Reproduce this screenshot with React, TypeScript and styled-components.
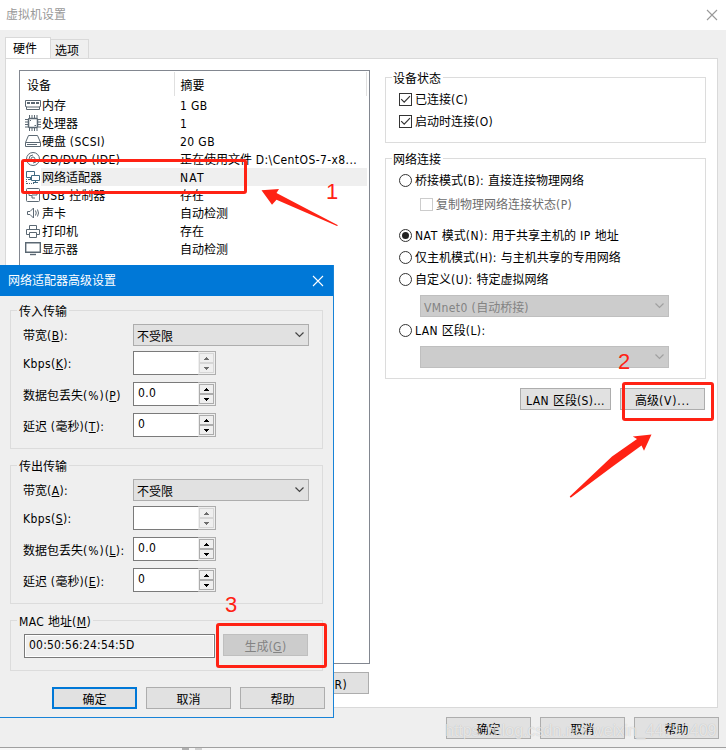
import React from "react";
import styled, { createGlobalStyle } from "styled-components";

const Global = createGlobalStyle`
  * { box-sizing: border-box; }
  body { margin: 0; overflow: hidden; }
`;

const Screen = styled.div`
  position: relative;
  width: 726px;
  height: 750px;
  overflow: hidden;
  background: #f7f7f7;
  color: #000;
  font: 12px/16px "DejaVu Sans Condensed", "Noto Sans CJK SC", sans-serif;
  white-space: pre;
`;

const SettingsWindow = styled.div`
  height: 748px;
  display: flex;
  flex-direction: column;
  background: #efefef;
  border-bottom: 1px solid #a0a0a0;
`;

const TitleBar = styled.div`
  height: 30px;
  flex: none;
  display: flex;
  align-items: center;
  justify-content: space-between;
  padding: 0 8px 0 6px;
  background: #fff;
  color: #999;
`;

const Tabs = styled.div`
  display: flex;
  align-items: flex-end;
  height: 28px;
  flex: none;
  padding-left: 5px;
`;

const Tab = styled.div<{ $active?: boolean }>`
  width: ${(p) => (p.$active ? 46 : 38)}px;
  height: ${(p) => (p.$active ? 22 : 19)}px;
  padding: ${(p) => (p.$active ? "3px 0 0 7px" : "3px 0 0 4px")};
  background: ${(p) => (p.$active ? "#fff" : "#efefef")};
  border: 1px solid #d9d9d9;
  border-bottom: 0;
  border-left-width: ${(p) => (p.$active ? 1 : 0)}px;
  margin-bottom: ${(p) => (p.$active ? -1 : 0)}px;
`;

const Panel = styled.div`
  display: flex;
  width: 713px;
  height: 650px;
  flex: none;
  margin-left: 5px;
  padding: 12px 0 0 13px;
  background: #fff;
  border: 1px solid #d9d9d9;
`;

const LeftColumn = styled.div`
  width: 351px;
  display: flex;
  flex-direction: column;
  align-items: flex-end;
  margin-top: -1px;
`;

const DeviceList = styled.div`
  width: 351px;
  height: 594px;
  margin-bottom: 8px;
  border: 1px solid #828790;
`;

const HeaderRow = styled.div`
  display: flex;
  height: 25px;
  padding: 1px 2px 0 0;
`;

const HeaderCell = styled.div<{ $w: number }>`
  width: ${(p) => p.$w}px;
  padding: 6px 0 0 ${(p) => (p.$w > 160 ? 6 : 7)}px;
  border-right: 1px solid #e0e0e0;
`;

const DeviceRow = styled.div`
  display: flex;
  height: 18px;
  padding-left: 5px;
`;

const IconCell = styled.div`
  width: 16px;
  display: flex;
  align-items: center;
`;

const DeviceCells = styled.div<{ $selected?: boolean }>`
  display: flex;
  width: 326px;
  height: 18px;
  line-height: 21px;
  padding-left: 1px;
  background: ${(p) => (p.$selected ? "#efefef" : "transparent")};
`;

const DeviceName = styled.div`
  width: 138px;
`;

const Latin = styled.span<{ $ls?: number }>`
  letter-spacing: ${(p) => p.$ls ?? 0.4}px;
`;

const RightColumn = styled.div`
  width: 321px;
  margin-left: 15px;
  padding-top: 6px;
`;

const Group = styled.div<{ $h: number; $gap?: number; $dialog?: boolean }>`
  height: ${(p) => p.$h}px;
  margin-bottom: ${(p) => p.$gap ?? 0}px;
  border: 1px solid #dcdcdc;
  background: ${(p) => (p.$dialog ? "#efefef" : "#fff")};
`;

const Legend = styled.div<{ $dialog?: boolean }>`
  width: fit-content;
  height: 16px;
  margin: -8px 0 0 6px;
  padding: 0 2px 0 ${(p) => (p.$dialog ? 2 : 1)}px;
  line-height: 18px;
  background: ${(p) => (p.$dialog ? "#efefef" : "#fff")};
`;

const OptionRow = styled.label<{ $top?: number; $indent?: boolean; $disabled?: boolean }>`
  display: flex;
  align-items: flex-start;
  gap: 3px;
  height: 22px;
  margin-top: ${(p) => p.$top ?? 0}px;
  padding: 4px 0 0 ${(p) => (p.$indent ? 34 : 13)}px;
  line-height: 15px;
  color: ${(p) => (p.$disabled ? "#6d6d6d" : "#000")};
`;

const Box = styled.span<{ $disabled?: boolean }>`
  width: 13px;
  height: 13px;
  flex: none;
  display: flex;
  background: #fff;
  border: 1px solid ${(p) => (p.$disabled ? "#ccc" : "#333")};
`;

const Radio = styled.span`
  width: 13px;
  height: 13px;
  flex: none;
  display: flex;
  align-items: center;
  justify-content: center;
  border: 1px solid #333;
  border-radius: 50%;
`;

const Dot = styled.span`
  width: 7px;
  height: 7px;
  border-radius: 50%;
  background: #222;
`;

const Select = styled.div<{ $disabled?: boolean; $top?: number }>`
  display: flex;
  align-items: center;
  justify-content: space-between;
  width: ${(p) => (p.$disabled ? 249 : 176)}px;
  height: 22px;
  flex: none;
  margin-left: ${(p) => (p.$disabled ? 34 : 0)}px;
  margin-top: ${(p) => p.$top ?? 0}px;
  padding: 0 4px 0 3px;
  line-height: 20px;
  color: ${(p) => (p.$disabled ? "#838383" : "#000")};
  background: ${(p) => (p.$disabled ? "#ccc" : "#e1e1e1")};
  border: 1px solid ${(p) => (p.$disabled ? "#bfbfbf" : "#adadad")};
`;

const SelectValue = styled.span`
  padding-top: 3px;
`;

const ButtonRow = styled.div<{ $top: number; $right: number }>`
  display: flex;
  justify-content: flex-end;
  gap: 9px;
  margin-top: ${(p) => p.$top}px;
  padding-right: ${(p) => p.$right}px;
`;

const PushButton = styled.div<{ $w?: number; $disabled?: boolean; $primary?: boolean; $inset?: boolean }>`
  display: flex;
  align-items: center;
  justify-content: center;
  width: ${(p) => p.$w ?? 85}px;
  height: 22px;
  flex: none;
  margin-right: ${(p) => (p.$inset ? 1 : 0)}px;
  padding-top: 3px;
  color: ${(p) => (p.$disabled ? "#838383" : "#000")};
  background: ${(p) => (p.$disabled ? "#ccc" : "#e1e1e1")};
  border: ${(p) => (p.$primary ? "2px solid #0078d7" : `1px solid ${p.$disabled ? "#bfbfbf" : "#adadad"}`)};
`;

const Dialog = styled.div`
  position: absolute;
  left: 0;
  top: 265px;
  width: 334px;
  height: 453px;
  background: #efefef;
  border: solid #1883d7;
  border-width: 0 1px 1px 0;
`;

const DialogTitle = styled.div`
  display: flex;
  align-items: center;
  justify-content: space-between;
  height: 31px;
  padding: 0 9px 0 8px;
  color: #fff;
  background: #0078d7;
`;

const DialogBody = styled.div`
  width: 323px;
  padding: 14px 0 0 10px;
`;

const Field = styled.div<{ $h: number; $top?: number; $indent?: number }>`
  display: flex;
  align-items: flex-start;
  height: ${(p) => p.$h}px;
  margin-top: ${(p) => p.$top ?? 0}px;
  padding-left: ${(p) => p.$indent ?? 12}px;
`;

const FieldLabel = styled.div<{ $top?: number }>`
  width: 110px;
  flex: none;
  padding-top: ${(p) => p.$top ?? 0}px;
`;

const Spinner = styled.div`
  display: flex;
  width: 83px;
  height: 24px;
  border: 1px solid #adadad;
  background: #efefef;
`;

const SpinValue = styled.div`
  width: 65px;
  height: 24px;
  flex: none;
  margin: -1px 0 0 -1px;
  padding: 2px 0 0 4px;
  background: #fff;
  border: 1px solid #7a7a7a;
  border-right: 0;
`;

const SpinButtons = styled.div`
  display: flex;
  flex-direction: column;
  width: 16px;
  margin: 1px 0 0 1px;
`;

const SpinButton = styled.div<{ $disabled?: boolean }>`
  display: flex;
  align-items: center;
  justify-content: center;
  width: 15px;
  height: 10px;
  color: ${(p) => (p.$disabled ? "#6d6d6d" : "#000")};
  border: 1px solid ${(p) => (p.$disabled ? "#d6d6d6" : "#acacac")};
`;

const MacInput = styled.div`
  width: 191px;
  height: 24px;
  margin-right: 8px;
  padding: 2px 0 0 4px;
  border: 1px solid #7a7a7a;
  box-shadow: inset 0 0 0 1px #fff;
`;

const BottomEdge = styled.div`
  display: flex;
  height: 2px;
  padding-left: 182px;
  gap: 6px;
`;

const EdgeMark = styled.div<{ $light?: boolean }>`
  width: 7px;
  background: ${(p) => (p.$light ? "#d0d0d0" : "#b0b0b0")};
`;

const Annotation = styled.svg`
  position: absolute;
  left: 0;
  top: 0;
`;

const Callout = styled.div<{ $x: number; $y: number; $w: number; $h: number }>`
  position: absolute;
  left: ${(p) => p.$x}px;
  top: ${(p) => p.$y}px;
  width: ${(p) => p.$w}px;
  height: ${(p) => p.$h}px;
  border: 3px solid #ff2214;
  border-radius: 3px;
`;

const StepNumber = styled.div<{ $x: number; $y: number }>`
  position: absolute;
  left: ${(p) => p.$x}px;
  top: ${(p) => p.$y}px;
  color: #ff2214;
  font: 22px/24px "Liberation Sans", sans-serif;
`;

const Watermark = styled.div`
  position: absolute;
  left: 445px;
  top: 721px;
  color: rgba(255, 255, 255, 0.65);
  font: 16px/20px "Liberation Sans", sans-serif;
  letter-spacing: -0.02px;
  text-shadow: 0 0 1px rgba(0, 0, 0, 0.22);
`;

/* Interface text: CJK runs keep their 12px cells, Latin runs are tracked slightly wider. */
const Mixed = ({ text, mnemonic, tail, ls }: { text: string; mnemonic?: string; tail?: string; ls?: number }) => (
  <span>
    {text
      .split(/([\x20-\x7e]+)/)
      .filter(Boolean)
      .map((run, i) =>
        /[\x20-\x7e]/.test(run) ? <Latin key={i} $ls={ls}>{run}</Latin> : <React.Fragment key={i}>{run}</React.Fragment>
      )}
    {mnemonic && (
      <Latin>
        (<u>{mnemonic}</u>){tail}
      </Latin>
    )}
  </span>
);

const Close = ({ color }: { color: string }) => (
  <svg width="12" height="12" viewBox="0 0 12 12" stroke={color} strokeWidth="1.1">
    <path d="M1 1L11 11M11 1L1 11" />
  </svg>
);

const Chevron = ({ color }: { color: string }) => (
  <svg width="9" height="6" viewBox="0 0 9 6" fill="none" stroke={color} strokeWidth="1.2">
    <path d="M.5 .5L4.5 4.5L8.5 .5" />
  </svg>
);

const Check = () => (
  <svg width="11" height="11" viewBox="0 0 11 11" fill="none" stroke="#333" strokeWidth="1.2">
    <path d="M1.2 5.2L4.2 8.2L10 2.2" />
  </svg>
);

const iconShapes: Record<string, React.ReactNode> = {
  memory: (
    <>
      <path d="M.5 3.5H15.5V9.5H14.5V12.5H1.5V9.5H.5Z" />
      <path d="M2 6H5M6 6H10M11 6H14" strokeWidth="2" />
      <path d="M2 10H14" />
    </>
  ),
  cpu: (
    <>
      <rect x="3.5" y="3.5" width="9" height="9" rx="1" strokeWidth="1.5" />
      <path d="M4.5 0V3M7 0V3M9.5 0V3M12 0V3M4.5 13V16M7 13V16M9.5 13V16M12 13V16M0 4.5H3M0 7H3M0 9.5H3M0 12H3M13 4.5H16M13 7H16M13 9.5H16M13 12H16" />
      <path d="M5 5.5H6M9.5 10.5H11" />
    </>
  ),
  disk: (
    <>
      <path d="M3.5 2.5H12.5L15.5 9.5V13.5H.5V9.5Z" />
      <path d="M.5 9.5H15.5M2 11.5H12" />
    </>
  ),
  cd: (
    <>
      <circle cx="8" cy="8" r="6.5" />
      <circle cx="8" cy="8" r="2" />
      <path d="M4 8A4 4 0 0 1 8 4M12 8A4 4 0 0 1 8 12" />
    </>
  ),
  network: (
    <>
      <path d="M1.5 2.5H9.5V8.5H1.5ZM5.5 9V10M3 10.5H7" stroke="#426b82" />
      <path d="M6.5 6.5H14.5V11.5H6.5Z" fill="#fff" stroke="#426b82" />
      <path d="M10.5 12V13M8 13.5H13" stroke="#426b82" />
      <path d="M1.5 10V15M2 14.5H9" strokeDasharray="1 1" />
    </>
  ),
  usb: (
    <>
      <rect x="1.5" y="1.5" width="13" height="13" rx="1" />
      <path d="M4 5V8.5H7V11H10M7 8H12V5M10 4.5H13" />
    </>
  ),
  sound: (
    <>
      <path d="M2.5 6.5H5L8.5 3V13L5 9.5H2.5Z" />
      <path d="M10.5 5.5Q12 8 10.5 10.5M12.5 4.5Q14.5 8 12.5 11.5" />
    </>
  ),
  printer: (
    <>
      <path d="M4.5 6.5V2.5H11.5V6.5M4.5 11.5H1.5V6.5H14.5V11.5H11.5" />
      <path d="M4.5 9.5H11.5V14.5H4.5Z" />
    </>
  ),
  display: (
    <>
      <path d="M.7 1.7H15.3V11.3H.7Z" strokeWidth="1.4" />
      <path d="M5 13.5H11" strokeWidth="1.4" />
    </>
  ),
};

const DeviceIcon = ({ name }: { name: string }) => (
  <svg width="16" height="16" viewBox="0 0 16 16" fill="none" stroke="#5b6873">
    {iconShapes[name]}
  </svg>
);

const devices: { icon: string; name: string; summary: string; selected?: boolean; ls?: number }[] = [
  { icon: "memory", name: "内存", summary: "1 GB" },
  { icon: "cpu", name: "处理器", summary: "1" },
  { icon: "disk", name: "硬盘 (SCSI)", summary: "20 GB" },
  { icon: "cd", name: "CD/DVD (IDE)", summary: "正在使用文件 D:\\CentOS-7-x8..." },
  { icon: "network", name: "网络适配器", summary: "NAT", selected: true, ls: 1.2 },
  { icon: "usb", name: "USB 控制器", summary: "存在" },
  { icon: "sound", name: "声卡", summary: "自动检测" },
  { icon: "printer", name: "打印机", summary: "存在" },
  { icon: "display", name: "显示器", summary: "自动检测" },
];

const Spin = ({ value, disabled }: { value: string; disabled?: boolean }) => (
  <Spinner>
    <SpinValue>
      <Mixed text={value} />
    </SpinValue>
    <SpinButtons>
      <SpinButton $disabled={disabled}>
        <svg width="5" height="3" fill="currentColor"><path d="M2 0H3V1H4V2H5V3H0V2H1V1H2Z" /></svg>
      </SpinButton>
      <SpinButton $disabled={disabled}>
        <svg width="5" height="3" fill="currentColor"><path d="M0 0H5V1H4V2H3V3H2V2H1V1H0Z" /></svg>
      </SpinButton>
    </SpinButtons>
  </Spinner>
);

const Transfer = ({ title, keys, tail }: { title: string; keys: string[]; tail: string }) => (
  <Group $h={139} $gap={16} $dialog>
    <Legend $dialog>{title}</Legend>
    <Field $h={27} $top={5}>
      <FieldLabel $top={4}><Mixed text="带宽" mnemonic={keys[0]} tail=":" /></FieldLabel>
      <Select>
        <SelectValue>不受限</SelectValue>
        <Chevron color="#444" />
      </Select>
    </Field>
    <Field $h={31}>
      <FieldLabel $top={5}><Mixed text="Kbps" mnemonic={keys[1]} tail=":" /></FieldLabel>
      <Spin value="" disabled />
    </Field>
    <Field $h={31}>
      <FieldLabel $top={6}><Mixed text="数据包丢失(%)" ls={1} mnemonic={keys[2]} tail={tail} /></FieldLabel>
      <Spin value="0.0" />
    </Field>
    <Field $h={31}>
      <FieldLabel $top={6}><Mixed text="延迟 (毫秒)" mnemonic={keys[3]} tail=":" /></FieldLabel>
      <Spin value="0" />
    </Field>
  </Group>
);

export default function App() {
  return (
    <Screen>
      <Global />
      <SettingsWindow>
        <TitleBar>
          虚拟机设置
          <Close color="#999" />
        </TitleBar>
        <Tabs>
          <Tab $active>硬件</Tab>
          <Tab>选项</Tab>
        </Tabs>
        <Panel>
          <LeftColumn>
            <DeviceList>
              <HeaderRow>
                <HeaderCell $w={155}>设备</HeaderCell>
                <HeaderCell $w={193}>摘要</HeaderCell>
              </HeaderRow>
              {devices.map((d) => (
                <DeviceRow key={d.name}>
                  <IconCell>
                    <DeviceIcon name={d.icon} />
                  </IconCell>
                  <DeviceCells $selected={d.selected}>
                    <DeviceName><Mixed text={d.name} /></DeviceName>
                    <Mixed text={d.summary} ls={d.ls} />
                  </DeviceCells>
                </DeviceRow>
              ))}
            </DeviceList>
            <PushButton $inset><Mixed text="移除(R)" /></PushButton>
          </LeftColumn>
          <RightColumn>
            <Group $h={66} $gap={15}>
              <Legend>设备状态</Legend>
              <OptionRow $top={3}>
                <Box><Check /></Box><Mixed text="已连接(C)" />
              </OptionRow>
              <OptionRow>
                <Box><Check /></Box><Mixed text="启动时连接(O)" />
              </OptionRow>
            </Group>
            <Group $h={221}>
              <Legend>网络连接</Legend>
              <OptionRow $top={3}><Radio /><Mixed text="桥接模式(B): 直接连接物理网络" /></OptionRow>
              <OptionRow $top={2} $indent $disabled><Box $disabled /><Mixed text="复制物理网络连接状态(P)" /></OptionRow>
              <OptionRow $top={9}><Radio><Dot /></Radio><Mixed text="NAT 模式(N): 用于共享主机的 IP 地址" ls={0.55} /></OptionRow>
              <OptionRow><Radio /><Mixed text="仅主机模式(H): 与主机共享的专用网络" /></OptionRow>
              <OptionRow><Radio /><Mixed text="自定义(U): 特定虚拟网络" /></OptionRow>
              <Select $disabled $top={4}>
                <SelectValue><Mixed text="VMnet0 (自动桥接)" /></SelectValue>
                <Chevron color="#a0a0a0" />
              </Select>
              <OptionRow $top={3}><Radio /><Mixed text="LAN 区段(L):" /></OptionRow>
              <Select $disabled $top={4}>
                <SelectValue />
                <Chevron color="#a0a0a0" />
              </Select>
            </Group>
            <ButtonRow $top={9} $right={1}>
              <PushButton $w={91}><Mixed text="LAN 区段(S)..." /></PushButton>
              <PushButton><Mixed text="高级(V)..." ls={0.8} /></PushButton>
            </ButtonRow>
          </RightColumn>
        </Panel>
        <ButtonRow $top={9} $right={7}>
          <PushButton>确定</PushButton>
          <PushButton>取消</PushButton>
          <PushButton>帮助</PushButton>
        </ButtonRow>
      </SettingsWindow>
      <BottomEdge>
        <EdgeMark />
        <EdgeMark $light />
      </BottomEdge>

      <Dialog>
        <DialogTitle>
          网络适配器高级设置
          <Close color="#fff" />
        </DialogTitle>
        <DialogBody>
          <Transfer title="传入传输" keys={["B", "K", "P", "T"]} tail="" />
          <Transfer title="传出传输" keys={["A", "S", "L", "E"]} tail=":" />
          <Group $h={51} $dialog>
            <Legend $dialog><Mixed text="MAC 地址" mnemonic="M" /></Legend>
            <Field $h={24} $top={5} $indent={13}>
              <MacInput><Mixed text="00:50:56:24:54:5D" ls={0.2} /></MacInput>
              <PushButton $disabled><Mixed text="生成" mnemonic="G" /></PushButton>
            </Field>
          </Group>
        </DialogBody>
        <ButtonRow $top={16} $right={8}>
          <PushButton $primary>确定</PushButton>
          <PushButton>取消</PushButton>
          <PushButton>帮助</PushButton>
        </ButtonRow>
      </Dialog>

      <Callout $x={21} $y={159} $w={226} $h={35} />
      <Callout $x={622} $y={382} $w={92} $h={39} />
      <Callout $x={216} $y={623} $w={111} $h={45} />
      <Annotation width="726" height="750" fill="#ff2214">
        <path d="M261.5 190.3L279 189L276.5 193L338 225.3L337 226L276.5 199.8L272 204.8Z" />
        <path d="M651.5 434.5L632.8 436.5L637 439L612 456.5L569.7 496.5L570.7 497.7L614 465.5L641.5 445.5L644 450.8Z" />
      </Annotation>
      <StepNumber $x={326} $y={180}>1</StepNumber>
      <StepNumber $x={618} $y={350}>2</StepNumber>
      <StepNumber $x={225} $y={593}>3</StepNumber>
      <Watermark>https://blog.csdn.net/weixin_44790409</Watermark>
    </Screen>
  );
}
